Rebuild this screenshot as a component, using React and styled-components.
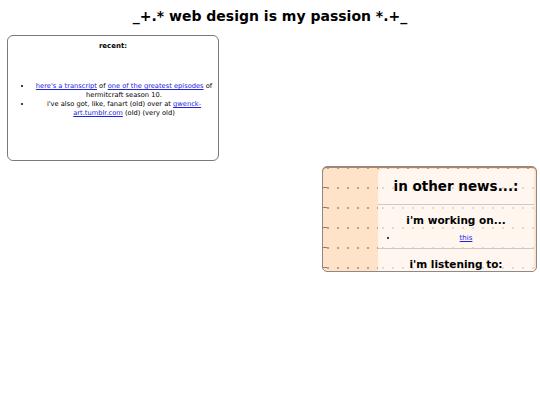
import React from "react";
import styled, { createGlobalStyle } from "styled-components";

const GlobalStyle = createGlobalStyle`
  html, body {
    margin: 0;
    padding: 0;
    background: #ffffff;
    font-family: "DejaVu Sans", Verdana, sans-serif;
    color: #000;
  }
`;

const Page = styled.div`
  width: 540px;
  height: 405px;
  overflow: hidden;
`;

const Title = styled.h1`
  margin: 0;
  padding-top: 8px;
  height: 27px;
  text-align: center;
  font-size: 14px;
  font-weight: bold;
`;

const Grid = styled.div`
  display: grid;
  grid-template-columns: 212px 1fr 215px;
  grid-template-rows: 126px 106px;
  row-gap: 5px;
  padding: 0 3px 0 7px;
`;

const RecentBox = styled.section`
  grid-column: 1;
  grid-row: 1;
  border: 1px solid #7a7a7a;
  border-radius: 6px;
  padding: 5px 2px;
  font-size: 6.7px;
  text-align: center;
`;

const BoxHeading = styled.h3`
  margin: 0 0 31px;
  font-size: 7px;
  font-weight: bold;
  line-height: 10px;
`;

const List = styled.ul`
  margin: 0;
  padding-left: 22px;
  line-height: 9px;
`;

const Link = styled.a`
  color: #2222e0;
  text-decoration: underline;
`;

const NewsBox = styled.section`
  grid-column: 3;
  grid-row: 2;
  display: flex;
  border: 1px solid #8a8a8a;
  border-radius: 5px;
  overflow: hidden;
  background-color: #ffe3c9;
  background-image:
    linear-gradient(180deg, #a0765e 0 1px, transparent 1px),
    radial-gradient(circle at 5px 1px, #c49a82 0.7px, transparent 1.2px);
  background-size: 4px 20px, 10px 20px;
  background-position: 0 20px, 0 20px;
  background-repeat: repeat-y, repeat;
  box-shadow: inset 0 1px 0 #b08468;
  padding-top: 2px;
`;

const Side = styled.div`
  width: 55px;
  flex: none;
`;

const Panel = styled.div`
  flex: 1;
  margin-right: 2px;
  border-top-left-radius: 5px;
  border-top-right-radius: 2px;
  background-color: #fff6ef;
  background-image: radial-gradient(circle at 5px 1px, #ead8cc 0.7px, transparent 1.2px);
  background-size: 10px 20px;
  background-position: 0 18px;
  text-align: center;
`;

const Section = styled.div`
  border-bottom: ${({ $last }) => ($last ? "none" : "1px solid #cfc8c2")};
  padding: ${({ $pad }) => $pad || "0"};
`;

const NewsTitle = styled.h2`
  margin: 0;
  font-size: 13.5px;
  font-weight: bold;
  line-height: 35px;
`;

const SubTitle = styled.h3`
  margin: 0;
  font-size: 10.5px;
  font-weight: bold;
  line-height: 16px;
`;

const SmallList = styled.ul`
  margin: 0;
  padding: 6px 0 5px 20px;
  font-size: 7px;
  line-height: 9px;
`;

export default function App() {
  return (
    <Page>
      <GlobalStyle />
      <Title>_+.* web design is my passion *.+_</Title>
      <Grid>
        <RecentBox>
          <BoxHeading>recent:</BoxHeading>
          <List>
            <li>
              <Link href="#">here's a transcript</Link> of{" "}
              <Link href="#">one of the greatest episodes</Link> of hermitcraft
              season 10.
            </li>
            <li>
              i've also got, like, fanart (old) over at{" "}
              <Link href="#">gwenck-art.tumblr.com</Link> (old) (very old)
            </li>
          </List>
        </RecentBox>
        <NewsBox>
          <Side />
          <Panel>
            <Section>
              <NewsTitle>in other news...:</NewsTitle>
            </Section>
            <Section $pad="7px 0 0">
              <SubTitle>i'm working on...</SubTitle>
              <SmallList>
                <li>
                  <Link href="#">this</Link>
                </li>
              </SmallList>
            </Section>
            <Section $last $pad="7px 0 0">
              <SubTitle>i'm listening to:</SubTitle>
            </Section>
          </Panel>
        </NewsBox>
      </Grid>
    </Page>
  );
}
